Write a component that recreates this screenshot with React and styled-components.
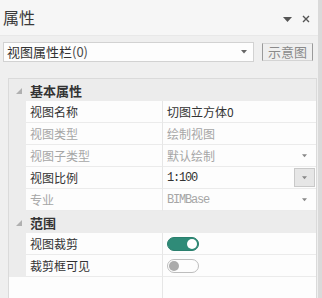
import React from "react";
import styled, { createGlobalStyle } from "styled-components";

const Global = createGlobalStyle`
  html, body { margin: 0; padding: 0; background: #efefef; }
  body { width: 322px; height: 298px; overflow: hidden; font-family: "Noto Sans CJK SC", "Noto Sans", sans-serif; }
`;

const CJK = `"Noto Sans CJK SC", "Noto Sans", sans-serif`;
const MONO = `"Liberation Mono", "Noto Sans CJK SC", monospace`;

const Panel = styled.div`
  width: 322px;
  height: 298px;
  box-sizing: border-box;
  border-right: 4px solid #dadada;
  background: #efefef;
  display: flex;
  flex-direction: column;
`;

const TitleBar = styled.div`
  height: 35px;
  flex: none;
  background: #f6f6f6;
  border-bottom: 1px solid #e8e8e8;
  display: flex;
  align-items: center;
  padding: 0 8px 0 3px;
`;

const Title = styled.div`
  flex: 1;
  font-family: ${CJK};
  font-size: 16px;
  color: #3a3a3a;
  line-height: 20px;
  margin-top: -1px;
`;

const TitleIcons = styled.div`
  display: flex;
  align-items: center;
  gap: 10px;
  margin-top: 3px;
`;

const Toolbar = styled.div`
  height: 42px;
  flex: none;
  display: flex;
  align-items: flex-start;
  padding: 6px 5px 0 3px;
  box-sizing: border-box;
  gap: 8px;
`;

const Select = styled.div`
  width: 251px;
  height: 20px;
  box-sizing: border-box;
  border: 1px solid #d2d2d2;
  background: #fdfdfd;
  display: flex;
  align-items: center;
  padding: 0 6px 0 3px;
  font-family: ${CJK};
  font-size: 13px;
  color: #333;
`;

const SelectText = styled.span`
  flex: 1;
  line-height: 18px;
`;

const Paren = styled.span`
  color: #4a4a4a;
`;

const GhostButton = styled.div`
  margin-top: 1px;
  width: 51px;
  height: 18px;
  box-sizing: border-box;
  border-top: 1px solid #d4d4d4;
  border-bottom: 1px solid #d4d4d4;
  border-left: 1px solid #9a9a9a;
  border-right: 1px solid #9a9a9a;
  display: flex;
  align-items: center;
  justify-content: center;
  font-family: ${CJK};
  font-size: 13px;
  color: #8a8a8a;
  line-height: 16px;
`;

const Grid = styled.div`
  flex: 1;
  margin: 0 1px 0 8px;
  border-top: 1px solid #dadada;
  border-left: 1px solid #dadada;
  border-right: 1px solid #dadada;
  background: #fdfdfd;
  display: flex;
  flex-direction: column;
`;

const CategoryRow = styled.div`
  height: 22px;
  flex: none;
  display: flex;
  align-items: center;
  background: #ececec;
`;

const Gutter = styled.div`
  width: 17px;
  flex: none;
  align-self: stretch;
  display: flex;
  align-items: center;
  justify-content: center;
  background: #ececec;
`;

const Expander = styled.svg`
  width: 6px;
  height: 6px;
  margin-left: 2px;
  margin-top: 1px;
`;

const CategoryLabel = styled.div`
  padding-left: 4px;
  font-family: ${CJK};
  font-size: 13px;
  font-weight: 700;
  color: #333;
`;

const Row = styled.div`
  height: 22px;
  flex: none;
  display: flex;
`;

const LabelCell = styled.div`
  width: 137px;
  flex: none;
  box-sizing: border-box;
  border-right: 1px solid #e6e6e6;
  border-bottom: 1px solid #ebebeb;
  display: flex;
  align-items: center;
  padding-left: 4px;
  font-family: ${CJK};
  font-size: 12px;
  color: ${(p) => (p.$disabled ? "#a6a6a6" : "#333")};
`;

const ValueCell = styled.div`
  flex: 1;
  box-sizing: border-box;
  border-bottom: 1px solid #ebebeb;
  display: flex;
  align-items: center;
  padding: 0 1px 0 4px;
  font-family: ${(p) => (p.$mono ? MONO : CJK)};
  font-size: 12px;
  letter-spacing: ${(p) => (p.$mono ? "-1.2px" : "0")};
  color: ${(p) => (p.$disabled ? "#a6a6a6" : "#333")};
`;

const ValueText = styled.span`
  flex: 1;
  white-space: nowrap;
`;

const ArrowSlot = styled.div`
  width: 21px;
  height: 19px;
  flex: none;
  box-sizing: border-box;
  display: flex;
  align-items: center;
  justify-content: center;
  background: ${(p) => (p.$boxed ? "#e6e6e6" : "transparent")};
  border: 1px solid ${(p) => (p.$boxed ? "#c9c9c9" : "transparent")};
`;

const Filler = styled.div`
  flex: 1;
  display: flex;
`;

const FillerLabel = styled.div`
  width: 137px;
  flex: none;
  box-sizing: border-box;
  margin-left: 17px;
  border-right: 1px solid #e6e6e6;
`;

const Toggle = styled.div`
  width: 32px;
  height: 14px;
  box-sizing: border-box;
  border-radius: 7px;
  background: ${(p) => (p.$on ? "#2f8b78" : "#fdfdfd")};
  border: 1px solid ${(p) => (p.$on ? "#2a7f6d" : "#bdbdbd")};
  display: flex;
  align-items: center;
  justify-content: ${(p) => (p.$on ? "flex-end" : "flex-start")};
  padding: 0 1px;
`;

const Knob = styled.div`
  width: 10px;
  height: 10px;
  border-radius: 50%;
  background: ${(p) => (p.$on ? "#ffffff" : "#ababab")};
`;

const DownArrow = ({ color = "#777", w = 6 }) => (
  <svg width={w} height={4} viewBox="0 0 6 4">
    <path d="M0 0 H6 L3 3.5 Z" fill={color} />
  </svg>
);

const Category = ({ label }) => (
  <CategoryRow>
    <Gutter>
      <Expander viewBox="0 0 6 6">
        <path d="M6 0 V6 H0 Z" fill="#b0b0b0" />
      </Expander>
    </Gutter>
    <CategoryLabel>{label}</CategoryLabel>
  </CategoryRow>
);

const Prop = ({ label, disabled, children, arrow, boxed, mono }) => (
  <Row>
    <Gutter />
    <LabelCell $disabled={disabled}>{label}</LabelCell>
    <ValueCell $disabled={disabled} $mono={mono}>
      <ValueText>{children}</ValueText>
      {arrow && (
        <ArrowSlot $boxed={boxed}>
          <DownArrow color="#888" w={5} />
        </ArrowSlot>
      )}
    </ValueCell>
  </Row>
);

export default function App() {
  return (
    <>
      <Global />
      <Panel>
        <TitleBar>
          <Title>属性</Title>
          <TitleIcons>
            <svg width="9" height="5" viewBox="0 0 9 5">
              <path d="M0 0 H9 L4.5 5 Z" fill="#555" />
            </svg>
            <svg width="8" height="8" viewBox="0 0 8 8">
              <path d="M1 1 L7 7 M7 1 L1 7" stroke="#555" strokeWidth="1.4" />
            </svg>
          </TitleIcons>
        </TitleBar>
        <Toolbar>
          <Select>
            <SelectText>
              视图属性栏<Paren>(0)</Paren>
            </SelectText>
            <DownArrow color="#666" w={6} />
          </Select>
          <GhostButton>示意图</GhostButton>
        </Toolbar>
        <Grid>
          <Category label="基本属性" />
          <Prop label="视图名称">切图立方体0</Prop>
          <Prop label="视图类型" disabled>绘制视图</Prop>
          <Prop label="视图子类型" disabled arrow>默认绘制</Prop>
          <Prop label="视图比例" arrow boxed mono>1:100</Prop>
          <Prop label="专业" disabled arrow mono>BIMBase</Prop>
          <Category label="范围" />
          <Prop label="视图裁剪">
            <Toggle $on>
              <Knob $on />
            </Toggle>
          </Prop>
          <Prop label="裁剪框可见">
            <Toggle>
              <Knob />
            </Toggle>
          </Prop>
          <Filler>
            <FillerLabel />
          </Filler>
        </Grid>
      </Panel>
    </>
  );
}
